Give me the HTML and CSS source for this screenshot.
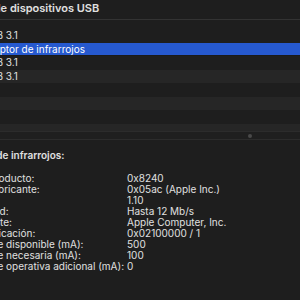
FILE: index.html
```html
<!DOCTYPE html>
<html>
<head>
  <title>Información del sistema - USB</title>
  <meta name="viewport" content="width=device-width, initial-scale=1">
  <link rel="stylesheet" href="styles.css">
</head>
<body>
  <div class="window">
    <div class="tree-pane">
      <div class="pane-title">Árbol de dispositivos USB</div>
      <div class="outline">
        <div class="row lvl0">Bus USB 3.1</div>
        <div class="row lvl1 selected">Receptor de infrarrojos</div>
        <div class="row lvl0">Bus USB 3.1</div>
        <div class="row lvl0">Bus USB 3.1</div>
        <div class="row"></div>
        <div class="row"></div>
        <div class="row"></div>
        <div class="row"></div>
      </div>
    </div>

    <div class="splitter"><span class="grip"></span></div>

    <div class="detail">
      <h3>Receptor de infrarrojos:</h3>
      <div class="props">
        <div class="label">ID del producto:</div><div class="value">0x8240</div>
        <div class="label">ID del fabricante:</div><div class="value">0x05ac (Apple Inc.)</div>
        <div class="label">Versión:</div><div class="value">1.10</div>
        <div class="label">Velocidad:</div><div class="value">Hasta 12 Mb/s</div>
        <div class="label">Fabricante:</div><div class="value">Apple Computer, Inc.</div>
        <div class="label">ID de ubicación:</div><div class="value">0x02100000 / 1</div>
        <div class="label">Corriente disponible (mA):</div><div class="value">500</div>
        <div class="label">Corriente necesaria (mA):</div><div class="value">100</div>
        <div class="label">Corriente operativa adicional (mA):</div><div class="value">0</div>
      </div>
    </div>
  </div>
</body>
</html>
```

FILE: styles.css
```css
html, body { margin: 0; padding: 0; background: #1e1e1e; overflow: hidden; }
body { font-family: Inter, "Liberation Sans", sans-serif; font-size: 10px; color: #e0e0e0; width: 300px; height: 300px; }

.window { margin-left: -60px; width: 620px; }

.tree-pane { height: 131px; overflow: hidden; border-bottom: 1px solid #2c2c2c; }
.pane-title { height: 19px; line-height: 16px; padding-left: 22px; font-size: 11px; font-weight: 600; border-bottom: 1px solid #333; }
.outline { padding-top: 9px; }
.row { height: 13.5px; line-height: 13.5px; white-space: nowrap; }
.row:nth-child(even) { background: #262626; }
.row.lvl0 { padding-left: 22px; }
.row.lvl1 { padding-left: 36px; }
.row.selected { background: #2659cf; color: #fff; box-shadow: inset 0 -1px 0 #1a1a1a; }

.splitter { height: 7px; display: flex; justify-content: center; align-items: center; border-bottom: 1px solid #2c2c2c; background: #1f1f1f; }
.grip { width: 4px; height: 4px; border-radius: 50%; background: #4a4a4a; }

.detail { padding: 8px 0 0 10px; }
.detail h3 { margin: 0 0 10px; font-size: 10px; font-weight: 600; line-height: 15px; }
.props { display: grid; grid-template-columns: 168px auto; line-height: 11px; margin-left: 9px; }
.props div { white-space: nowrap; }
```
